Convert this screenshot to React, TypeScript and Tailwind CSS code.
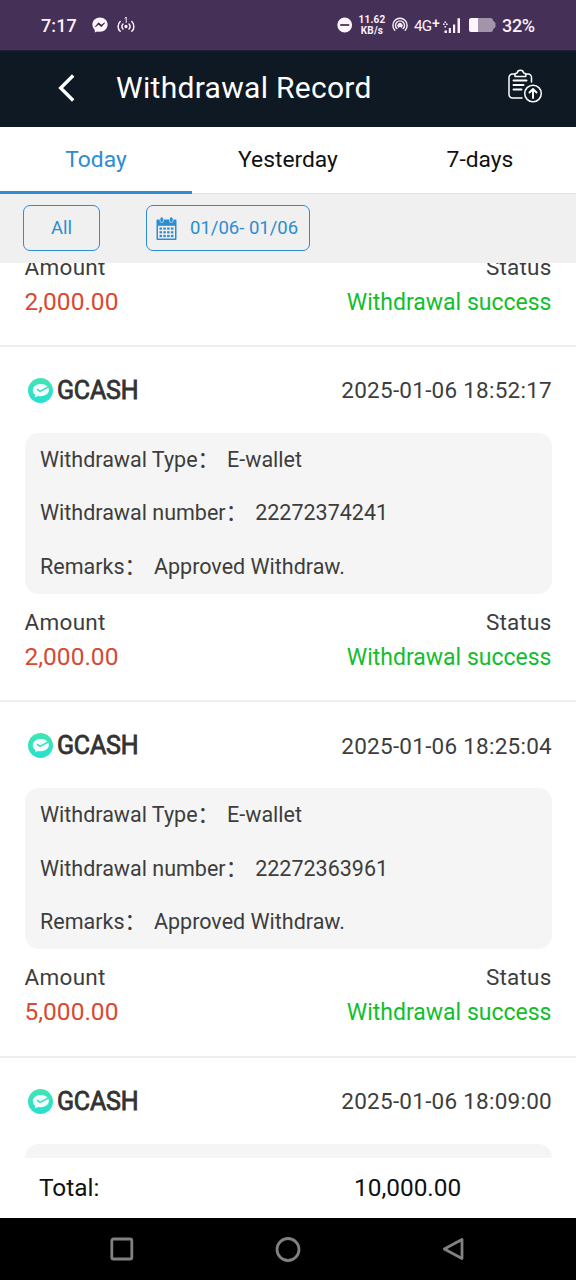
import React from "react";

type WithdrawalRecord = {
  time: string;
  number: string;
  amount: string;
};

const records: WithdrawalRecord[] = [
  { time: "2025-01-06 18:52:17", number: "22272374241", amount: "2,000.00" },
  { time: "2025-01-06 18:25:04", number: "22272363961", amount: "5,000.00" },
];

function StatusBar() {
  return (
    <div className="flex h-[51px] shrink-0 items-center border-b border-[#1f1d33] bg-[#453057] pl-[41px] text-[#fdeffc]">
      <span className="mt-0.5 w-[51px] text-[18px] font-medium leading-6 tracking-[0.1px]">7:17</span>
      <svg className="h-4 w-4 shrink-0" viewBox="0 0 16 16">
        <path d="M8 .5C3.700.5.4 3.600.4 7.600c0 2.200.9 4 2.400 5.300v2.600l2.500-1.100c.8.2 1.700.4 2.700.4 4.300 0 7.600-3.100 7.600-7.200S12.300.5 8 .5z" fill="#fff5ff" />
        <path d="M3.300 9.700l3.200-3.900 2.900 2.300 3.300-2.300-3.200 3.900-2.900-2.300z" fill="#332040" stroke="#332040" strokeWidth=".7" />
      </svg>
      <svg className="ml-[9px] h-[18px] w-[18px] shrink-0" viewBox="0 0 18 18" fill="none" stroke="currentColor" strokeWidth="1.5" strokeLinecap="round">
        <path d="M3.200 5.500c-2.800 2.500-2.800 7.300 0 9.800M14.800 5.500c2.800 2.500 2.800 7.300 0 9.800M6 8c-1.500 1.400-1.500 3.600 0 5M12 8c1.500 1.400 1.500 3.600 0 5" />
        <path d="M8 2.200L9.200 1v5.500" strokeWidth="1" />
        <circle cx="9" cy="10.500" r=".9" fill="currentColor" />
      </svg>
      <svg className="ml-[202px] h-4 w-4 shrink-0" viewBox="0 0 16 16">
        <circle cx="7.700" cy="8" r="7.400" fill="#fff5ff" />
        <path d="M3.200 8h9" stroke="#332040" strokeWidth="1.600" />
      </svg>
      <div className="ml-[5px] mt-px flex w-[28px] flex-col items-center text-[10px] font-bold leading-[10.5px] tracking-[0.2px]">
        <span>11.62</span>
        <span>KB/s</span>
      </div>
      <svg className="ml-[6px] h-4 w-4 shrink-0" viewBox="0 0 16 16" fill="none" stroke="currentColor" strokeWidth="1.400" strokeLinecap="round">
        <path d="M2.800 13.200a7.100 7.100 0 1 1 10.400 0M4.900 11.600a4.500 4.500 0 1 1 6.200 0M6.500 10a2 2 0 1 1 3 0" />
        <circle cx="8" cy="8.600" r="1" fill="currentColor" />
      </svg>
      <span className="ml-1.5 mt-0.5 flex w-[29px] whitespace-nowrap text-[15.200px] leading-6 tracking-[-0.9px]">4G<span className="-mt-[3px] ml-px text-[14px] font-medium">+</span></span>
      <svg className="h-[17px] w-[18px] shrink-0" viewBox="0 0 18 17" fill="currentColor">
        <path d="M1.500 13.500H4V16H1.500zM5.800 11h2.100v5H5.800zM10 7.500h2.200V16H10zM14.500 1.200H17V16h-2.500z" />
        <path d="M0 6.500h1.600v1.600H0zM3 6.500h1.600v1.600H3zM1.500 4.500h1.600v1.600H1.500zM1.500 9h1.600v1.600H1.500z" />
      </svg>
      <svg className="ml-2 h-[14px] w-[27px] shrink-0" viewBox="0 0 27 14">
        <path d="M2.500 0h19a2.500 2.500 0 0 1 2.500 2.500L26.500 5v4L24 11.500a2.500 2.500 0 0 1-2.500 2.500h-19A2.500 2.500 0 0 1 0 11.500v-9A2.500 2.500 0 0 1 2.500 0z" fill="#a394ac" />
        <path d="M2.500 0H9v14H2.500A2.500 2.500 0 0 1 0 11.500v-9A2.500 2.500 0 0 1 2.500 0z" fill="#fff5ff" />
      </svg>
      <span className="ml-[6px] mt-0.5 text-[18px] font-medium leading-6 tracking-[-0.3px]">32%</span>
    </div>
  );
}

function Header() {
  return (
    <header className="flex h-[76px] shrink-0 items-center bg-[#0f1923] pb-0.5 pl-[57px] text-white">
      <svg className="-mt-[3px] h-[30px] w-5 shrink-0" viewBox="0 0 20 30" fill="none" stroke="currentColor" strokeWidth="3.400">
        <path d="M16.200 3.500L3.700 16l12.500 12.500" />
      </svg>
      <h1 className="ml-[39px] w-[392px] text-[30px] leading-9 tracking-[0.3px]">Withdrawal Record</h1>
      <svg className="-mt-0.5 h-[36px] w-[36px] shrink-0" viewBox="0 0 36 36" fill="none" stroke="currentColor" strokeWidth="1.500" strokeLinecap="round" strokeLinejoin="round">
        <path d="M7 5H4.500A3.500 3.500 0 0 0 1 8.500v17A3.500 3.500 0 0 0 4.500 29H14M17.500 5H20a3.500 3.500 0 0 1 3.500 3.500V13" />
        <path d="M7 7.500V6c0-1.200 1-2 2.200-2 .4-3.700 6-3.700 6.400 0 1.200 0 2.200.8 2.200 2v1.500z" />
        <path d="M5.500 11.500h13M5.500 16h10M5.500 20.500h8" strokeWidth="1.900" />
        <circle cx="25" cy="24.500" r="8.300" />
        <path d="M25 29v-8.500M21.500 23.500l3.500-3.500 3.500 3.500" strokeWidth="1.900" />
      </svg>
    </header>
  );
}

function Tabs() {
  return (
    <nav className="grid h-[67px] shrink-0 grid-cols-3 border-b border-[#e2e2e2] bg-white text-center text-[22.800px] leading-[66px] text-[#111]">
      <div className="h-[67px] border-b-[3px] border-[#2c8dd0] text-[#2c8dd0]">Today</div>
      <div>Yesterday</div>
      <div>7-days</div>
    </nav>
  );
}

function CalendarIcon() {
  const rows = [10.5, 14.2, 17.9];
  const cols = [3.5, 7.3, 11.1, 14.9];
  return (
    <svg className="h-[23px] w-[21px] shrink-0" viewBox="0 0 21 23">
      <path d="M1.500 2.500h18a1 1 0 0 1 1 1V22a1 1 0 0 1-1 1h-18a1 1 0 0 1-1-1V3.500a1 1 0 0 1 1-1z" fill="#2c8dd0" />
      <path d="M2 8.800h17V21.500H2z" fill="#f0f0f0" />
      <rect x="4" y="0" width="3.500" height="5.500" rx="1.700" fill="#2c8dd0" stroke="#f0f0f0" strokeWidth=".7" />
      <rect x="13.500" y="0" width="3.500" height="5.500" rx="1.700" fill="#2c8dd0" stroke="#f0f0f0" strokeWidth=".7" />
      {rows.map((y) => cols.map((x) => <rect key={`${x}-${y}`} x={x} y={y} width="2.500" height="2.200" fill="#2c8dd0" />))}
    </svg>
  );
}

function Filters() {
  return (
    <div className="flex h-[69px] shrink-0 bg-[#f0f0f0] pl-[23px] pt-[11px] text-[18.500px] text-[#2c8dd0]">
      <button className="h-[46px] w-[77px] rounded-[7px] border border-[#2c8dd0] pt-0.5">All</button>
      <button className="ml-[46px] flex h-[46px] w-[164px] items-center rounded-[7px] border border-[#2c8dd0] pl-[9px]">
        <CalendarIcon />
        <span className="ml-[13px] whitespace-nowrap pt-px">01/06- 01/06</span>
      </button>
    </div>
  );
}

function RecordTitle({ time }: { time: string }) {
  return (
    <div className="flex h-[86px] items-center justify-between pl-[28px] pr-[24px]">
      <div className="flex items-center">
        <svg className="h-[26px] w-[26px]" viewBox="0 0 26 26">
          <defs>
            <linearGradient id="wallet" x2="0" y2="1">
              <stop stopColor="#43e5b1" />
              <stop offset="1" stopColor="#27dfd0" />
            </linearGradient>
          </defs>
          <circle cx="12.500" cy="13.500" r="12.500" fill="url(#wallet)" />
          <path d="M12.800 7c-4.600 0-8 2.700-8 6.300 0 2 .9 3.500 2.500 4.600l-.5 2.400 3.500-1.300c5.700 1 10.600-1.800 10.600-5.900C20.900 9.600 17.500 7 12.800 7z" fill="#f3fffd" />
          <path d="M9 12.200l3 2.200 8-4.300" fill="none" stroke="#35dfbd" strokeWidth="1.600" />
        </svg>
        <span className="ml-[3px] mt-0.5 text-[25px] leading-8 tracking-[-0.200px] text-[#333] [-webkit-text-stroke:0.800px_#333]">GCASH</span>
      </div>
      <span className="pt-0.5 text-[22.500px] tracking-[0.250px] text-[#3d3d3d]">{time}</span>
    </div>
  );
}

function DetailRow({ label, value }: { label: string; value: string }) {
  return (
    <div className="flex h-[53.600px] items-center whitespace-nowrap">
      <span>{label}：</span>
      <span className="ml-[8px]">{value}</span>
    </div>
  );
}

function RecordSummary({ amount }: { amount: string }) {
  return (
    <div className="flex h-[108.200px] justify-between border-b-2 border-[#eeeeee] px-[24.500px] pt-[11px] leading-[34.500px]">
      <div>
        <div className="text-[22.500px] tracking-[0.300px] text-[#3d3d3d]">Amount</div>
        <div className="text-[24.500px] text-[#d64a32]">{amount}</div>
      </div>
      <div className="text-right">
        <div className="text-[22.500px] tracking-[0.200px] text-[#3d3d3d]">Status</div>
        <div className="pt-px text-[23px] text-[#12be2c]">Withdrawal success</div>
      </div>
    </div>
  );
}

function RecordList() {
  return (
    <main className="h-[895px] shrink-0 overflow-hidden bg-white">
      <div className="-mt-[24px]">
        <RecordSummary amount="2,000.00" />
        {records.map((record) => (
          <section key={record.number}>
            <RecordTitle time={record.time} />
            <div className="mx-[24.500px] h-[161px] rounded-[14px] bg-[#f5f5f5] pl-[15.500px] text-[21.500px] text-[#3d3d3d]">
              <DetailRow label="Withdrawal Type" value="E-wallet" />
              <DetailRow label="Withdrawal number" value={record.number} />
              <DetailRow label="Remarks" value="Approved Withdraw." />
            </div>
            <RecordSummary amount={record.amount} />
          </section>
        ))}
        <RecordTitle time="2025-01-06 18:09:00" />
        <div className="mx-[24.500px] h-[161px] rounded-[14px] bg-[#f5f5f5]" />
      </div>
    </main>
  );
}

export default function App() {
  return (
    <div className="flex h-[1280px] w-[576px] flex-col overflow-hidden bg-white font-[Roboto,'Noto_Sans_CJK_SC',sans-serif]">
      <StatusBar />
      <Header />
      <Tabs />
      <Filters />
      <RecordList />
      <div className="flex h-[60px] shrink-0 items-center bg-white pl-[39px] text-[24.400px] text-[#111]">
        <span className="w-[315px]">Total:</span>
        <span>10,000.00</span>
      </div>
      <footer className="flex h-[62px] shrink-0 items-center bg-black pl-[110px] text-[#818181]">
        <svg className="h-6 w-6" viewBox="0 0 24 24" fill="none" stroke="currentColor" strokeWidth="2.800">
          <rect x="1.800" y="2" width="20" height="20" rx="1.800" />
        </svg>
        <svg className="ml-[141px] h-[26px] w-[26px]" viewBox="0 0 26 26" fill="none" stroke="currentColor" strokeWidth="2.800">
          <circle cx="13" cy="13.500" r="11" />
        </svg>
        <svg className="ml-[141px] h-6 w-6" viewBox="0 0 24 24" fill="none" stroke="currentColor" strokeWidth="2.800" strokeLinejoin="round">
          <path d="M20 2.500v19L2.300 12z" />
        </svg>
      </footer>
    </div>
  );
}
